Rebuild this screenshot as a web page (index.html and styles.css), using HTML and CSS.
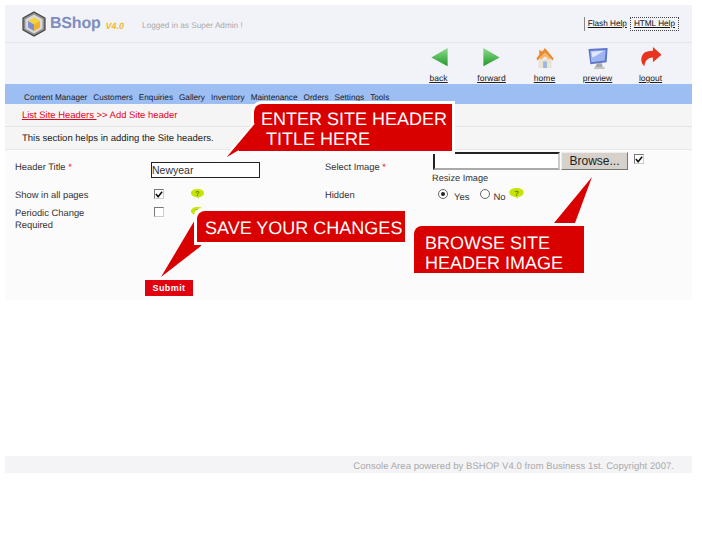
FILE: index.html
```html
<!DOCTYPE html>
<html lang="en">
<head>
<meta charset="utf-8">
<title>BShop - Add Site Header</title>
<link rel="stylesheet" href="styles.css">
</head>
<body>
<div class="page">
  <header class="top">
    <div class="brand">
      <svg class="logo" width="24" height="26" viewBox="0 0 24 26">
        <path d="M12 1 23 7v12l-11 6L1 19V7z" fill="#8d8d8d" stroke="#444" stroke-width="1.2"/>
        <path d="M12 3.500 20.600 8.200v9.600L12 22.500l-8.600-4.700V8.200z" fill="#d9d9d9"/>
        <path d="M12 6.500 18 10l-6 3.500L6 10z" fill="#f6d23a"/>
        <path d="M6 10l6 3.500V20l-6-3.500z" fill="#7d8fd0"/>
        <path d="M18 10l-6 3.500V20l6-3.500z" fill="#f2b32a"/>
      </svg>
      <span class="brand-name">BShop</span>
      <span class="brand-ver">V4.0</span>
      <span class="logged">Logged in as Super Admin !</span>
    </div>
    <div class="help">
      <a class="help-flash" href="#">Flash Help</a>
      <a class="help-html" href="#">HTML Help</a>
    </div>
  </header>

  <div class="tools">
    <a class="tool" href="#">
      <svg width="24" height="24" viewBox="0 0 24 24">
        <defs><linearGradient id="gb" x1="0" y1="0" x2="0" y2="1"><stop offset="0" stop-color="#8fdc8a"/><stop offset="1" stop-color="#1f9a2c"/></linearGradient></defs>
        <path d="M4 11 21 1v19z" fill="url(#gb)"/>
      </svg>
      <span>back</span>
    </a>
    <a class="tool" href="#">
      <svg width="24" height="24" viewBox="0 0 24 24">
        <path d="M20 11 3 1v19z" fill="url(#gb)"/>
      </svg>
      <span>forward</span>
    </a>
    <a class="tool" href="#">
      <svg width="24" height="24" viewBox="0 0 24 24">
        <path d="M5 12h14v10H5z" fill="#e8e4d8"/>
        <path d="M10 15h4v7h-4z" fill="#9fb6d8"/>
        <path d="M12 1 21 12l-1 2-8-8-8 8-1-2 3-4V3l2 1 1 1z" fill="#ea8a2e"/>
        <path d="M6 12l6-6 6 6-2 1-4-3-4 3z" fill="#f6b56a"/>
      </svg>
      <span>home</span>
    </a>
    <a class="tool" href="#">
      <svg width="24" height="24" viewBox="0 0 24 24">
        <path d="M2 2 22 1l-1 15-17 2z" fill="#5f74c8"/>
        <path d="M4 4 20 3l-1 11-14 2z" fill="#9db6f2"/>
        <path d="M5 5l13-1-8 5-4 2z" fill="#dfe8fb"/>
        <path d="M11 17h5l1 4H9z" fill="#a8a8a8"/>
        <path d="M8 21h11v2H8z" fill="#c2c2c2"/>
      </svg>
      <span>preview</span>
    </a>
    <a class="tool" href="#">
      <svg width="24" height="24" viewBox="0 0 24 24">
        <path d="M14 0 23 8l-9 8v-5c-5 0-8 3-9 9-4-4-4-9-1-13 2-2 6-3 10-3z" fill="#e8351f"/>
      </svg>
      <span>logout</span>
    </a>
  </div>

  <nav class="menu">
    <a href="#">Content Manager</a>
    <a href="#">Customers</a>
    <a href="#">Enquiries</a>
    <a href="#">Gallery</a>
    <a href="#">Inventory</a>
    <a href="#">Maintenance</a>
    <a href="#">Orders</a>
    <a href="#">Settings</a>
    <a href="#">Tools</a>
  </nav>

  <div class="crumb"><a href="#">List Site Headers </a>&gt;&gt; Add Site header</div>
  <div class="intro">This section helps in adding the Site headers.</div>

  <form class="form">
    <div class="grid">
      <label class="cell-title">Header Title <b>*</b></label>
      <div><input class="text" type="text" value="Newyear"></div>
      <label class="cell-title">Select Image <b>*</b></label>
      <div class="upload">
        <div class="upload-row">
          <span class="file"></span>
          <button class="browse" type="button">Browse...</button>
          <span class="check up-check"><svg width="9" height="9" viewBox="0 0 9 9"><path d="M1 4l2.500 3L8 1.500" fill="none" stroke="#111" stroke-width="1.800"/></svg></span>
        </div>
        <div class="resize">Resize Image</div>
      </div>

      <label class="cell-show">Show in all pages</label>
      <div class="opts">
        <span class="check"><svg width="9" height="9" viewBox="0 0 9 9"><path d="M1 4l2.500 3L8 1.500" fill="none" stroke="#111" stroke-width="1.800"/></svg></span>
        <svg class="q" width="13" height="10" viewBox="0 0 13 10"><path d="M6.500 0C10 0 13 1.500 13 4s-3 4-5 4l-1 2-1-2C3 8 0 6.500 0 4s3-4 6.500-4z" fill="#c4e600"/><text x="6.500" y="7" text-anchor="middle" class="q-mark">?</text></svg>
      </div>
      <label class="cell-show">Hidden</label>
      <div class="radios">
        <span class="radio on"></span><span class="r-yes">Yes</span>
        <span class="radio"></span><span class="r-no">No</span>
        <svg class="q-r" width="15" height="11" viewBox="0 0 13 10"><path d="M6.500 0C10 0 13 1.500 13 4s-3 4-5 4l-1 2-1-2C3 8 0 6.500 0 4s3-4 6.500-4z" fill="#c4e600"/><text x="6.500" y="7" text-anchor="middle" class="q-mark">?</text></svg>
      </div>

      <label class="cell-per">Periodic Change<br>Required</label>
      <div class="opts">
        <span class="check"></span>
        <svg class="q" width="13" height="10" viewBox="0 0 13 10"><path d="M6.500 0C10 0 13 1.500 13 4s-3 4-5 4l-1 2-1-2C3 8 0 6.500 0 4s3-4 6.500-4z" fill="#c4e600"/><text x="6.500" y="7" text-anchor="middle" class="q-mark">?</text></svg>
      </div>
    </div>
    <button class="submit" type="button">Submit</button>
  </form>

  <footer class="foot">Console Area powered by BSHOP V4.0 from Business 1st. Copyright 2007.</footer>
</div>

<div class="callout c-title">
  <svg class="tail" width="50" height="65" viewBox="0 0 50 65"><path d="M33 19 1 57 18 47h18V19z" fill="#d90000"/><path d="M33 19 1 57 18 47" fill="none" stroke="#fff" stroke-width="2"/></svg>
  <div class="bubble">ENTER SITE HEADER<br>&nbsp;TITLE HERE</div>
</div>
<div class="callout c-save">
  <svg class="tail" width="50" height="70" viewBox="0 0 50 70"><path d="M40 2 2 66 42 35z" fill="#d90000"/></svg>
  <div class="bubble">SAVE YOUR CHANGES</div>
</div>
<div class="callout c-browse">
  <svg class="tail" width="40" height="48" viewBox="0 0 40 48"><path d="M38 0 0 46h21z" fill="#d90000"/></svg>
  <div class="bubble">BROWSE SITE<br>HEADER IMAGE</div>
</div>
</body>
</html>
```
FILE: styles.css
```css
* { box-sizing: border-box; }
html, body { margin: 0; padding: 0; background: #fff; }
body { position: relative; width: 702px; height: 535px; overflow: hidden; font-family: "Liberation Sans", Arial, sans-serif; font-size: 9px; color: #222; text-rendering: geometricPrecision; }
a { color: inherit; }
.page { margin-left: 5px; width: 687px; padding-top: 5px; }

.top { height: 38px; background: #f2f3f8; border-bottom: 1px solid #e6e6ea; display: flex; justify-content: space-between; align-items: flex-start; }
.brand { display: flex; align-items: center; padding: 5px 0 0 17px; height: 32px; }
.logo { flex: none; }
.brand-name { margin-left: 4px; font-size: 16px; font-weight: bold; letter-spacing: -.2px; color: #7d8dc0; }
.brand-ver { margin-left: 5px; margin-top: 4px; font-size: 9px; font-weight: bold; font-style: italic; color: #f3b72c; }
.logged { margin-left: 18px; margin-top: 4px; color: #aaa; font-size: 8.200px; }
.help { display: flex; align-items: center; margin: 12px 13px 0 0; height: 14px; font-size: 8.200px; }
.help-flash { border-left: 1px solid #888; padding: 0 3px; line-height: 14px; color: #111; }
.help-html { border: 1px dotted #444; padding: 0 3px; line-height: 12px; color: #111; }

.tools { height: 41px; background: #f2f3f8; display: flex; justify-content: flex-end; padding-right: 15px; }
.tool { width: 53px; display: flex; flex-direction: column; align-items: center; padding-top: 4px; color: #222; font-size: 8.500px; line-height: 11px; }
.tool svg { display: block; height: 24px; margin-bottom: 3px; }
.tool span { text-decoration: underline; }

.menu { height: 20px; background: #9dbef3; display: flex; gap: 6px; align-items: flex-end; padding: 0 0 1px 19px; font-size: 8.200px; }
.menu a { text-decoration: none; color: #1a1a2a; line-height: 11px; }

.crumb { height: 23px; background: #f5f5f5; border-bottom: 1px solid #e4e4e4; padding-left: 17px; line-height: 23px; font-size: 9.450px; color: #e8001c; }
.intro { height: 23px; background: #f5f5f5; border-bottom: 1px solid #e8e8e8; padding-left: 17px; line-height: 24px; font-size: 9.500px; color: #222; }

.form { height: 150px; background: #fbfbfb; padding: 2px 0 0 10px; position: relative; display: flex; flex-direction: column; }
.grid { display: grid; grid-template-columns: 136px 174px 107px 1fr; grid-template-rows: 35px 18px 30px; }
label { font-size: 9.400px; line-height: 12px; color: #333; }
label b { color: #e8001c; font-weight: normal; }
.cell-title { padding-top: 9px; }
.cell-show { padding-top: 2px; }
.cell-per { padding-top: 2px; }
.text { display: block; width: 109px; height: 16px; margin-top: 10px; border: 1px solid #222; background: #fff; padding: 0; font: 10.500px "Liberation Sans", Arial, sans-serif; color: #333; }
.upload-row { display: flex; height: 18px; padding-left: 1px; }
.file { width: 127px; height: 18px; background: #fff; border: 2px solid; border-color: #222 #ccc #aaa #222; }
.browse { width: 67px; height: 18px; margin-left: 1px; padding: 0; border: 1px solid; border-color: #eee #777 #777 #eee; background: #d6d2cb; font: 12px "Liberation Sans", Arial, sans-serif; color: #222; }
.up-check { margin: 2px 0 0 6px; }
.resize { margin-top: 2px; font-size: 9.200px; line-height: 12px; color: #333; }
.opts { display: flex; align-items: flex-start; padding: 2px 0 0 3px; }
.check { display: flex; width: 10px; height: 10px; border: 1px solid #777; border-right-color: #ccc; border-bottom-color: #ccc; background: #fff; flex: none; }
.q { margin-left: 27px; flex: none; }
.q-mark { font: bold 7px "Liberation Sans", Arial, sans-serif; fill: #77770a; }
.radios { display: flex; align-items: flex-start; padding: 2px 0 0 6px; font-size: 9.500px; color: #333; }
.radio { width: 10px; height: 10px; border: 1px solid #666; border-radius: 50%; background: #fff; flex: none; position: relative; }
.radio.on::after { content: ""; position: absolute; left: 2px; top: 2px; width: 4px; height: 4px; border-radius: 50%; background: #222; }
.r-yes { margin: 3px 10px 0 6px; line-height: 11px; }
.r-no { margin: 3px 3px 0 4px; line-height: 11px; }
.q-r { flex: none; margin-top: -1px; }
.submit { align-self: flex-start; width: 48px; height: 16px; margin: 45px 0 0 130px; padding: 0; border: 0; background: #e00010; color: #fff; font: bold 9px "Liberation Sans", Arial, sans-serif; letter-spacing: .4px; }

.foot { margin-top: 156px; height: 17px; background: #f4f3f5; text-align: right; padding-right: 18px; line-height: 21px; font-size: 9.500px; letter-spacing: .05px; color: #aaa; }

.callout { position: absolute; color: #fff; }
.bubble { position: relative; background: #d90000; font-size: 18px; line-height: 20px; white-space: nowrap; }
.tail { position: absolute; display: block; }
.c-title { left: 254px; top: 104px; width: 198px; height: 47px; }
.c-title .bubble { height: 47px; padding: 5px 0 0 7px; border-top-left-radius: 8px; box-shadow: 0 0 0 3px #fff; }
.c-title .tail { left: -33px; top: 0; z-index: 1; }
.c-save { left: 197px; top: 211px; width: 208px; height: 31px; }
.c-save .bubble { height: 31px; padding: 7px 0 0 8px; border-top-left-radius: 8px; box-shadow: -3px -3px 0 #fff, -3px 3px 0 #fff; }
.c-save .tail { left: -38px; top: 0; }
.c-browse { left: 414px; top: 226px; width: 170px; height: 47px; }
.c-browse .bubble { height: 47px; padding: 7px 0 0 11px; border-top-left-radius: 8px; }
.c-browse .tail { left: 140px; top: -49px; }
```
